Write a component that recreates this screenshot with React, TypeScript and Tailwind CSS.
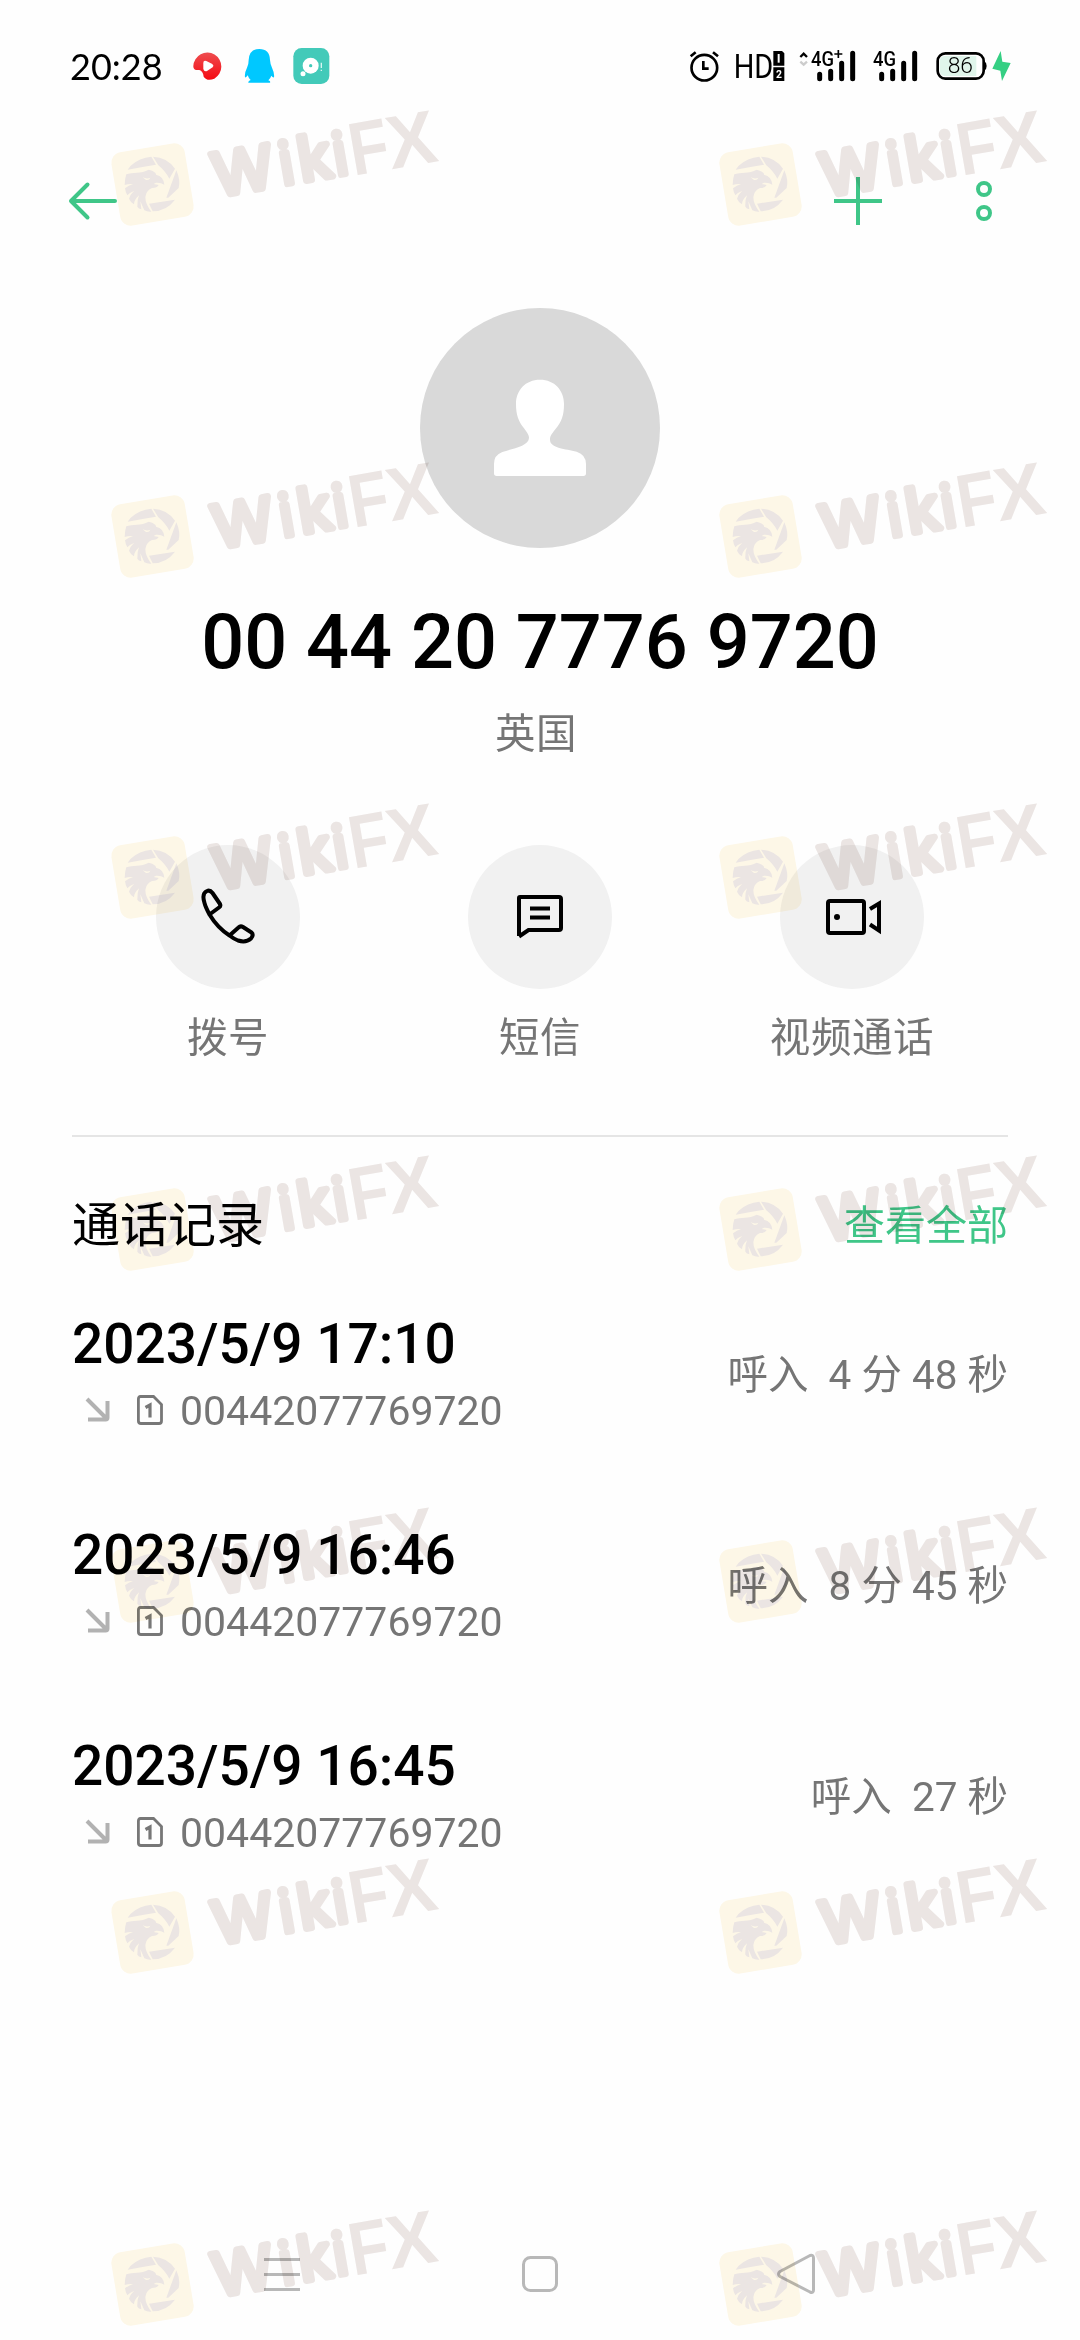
import React from "react";

const GREEN = "#3fc688";

const calls = [
  { date: "2023/5/9 17:10", duration: "4 分 48 秒" },
  { date: "2023/5/9 16:46", duration: "8 分 45 秒" },
  { date: "2023/5/9 16:45", duration: "27 秒" },
];

const marks = [
  "left-[50px] top-[70px]",
  "left-[658px] top-[70px]",
  "left-[50px] top-[422px]",
  "left-[658px] top-[422px]",
  "left-[50px] top-[763px]",
  "left-[658px] top-[763px]",
  "left-[50px] top-[1115px]",
  "left-[658px] top-[1115px]",
  "left-[50px] top-[1467px]",
  "left-[658px] top-[1467px]",
  "left-[50px] top-[1818px]",
  "left-[658px] top-[1818px]",
  "left-[50px] top-[2170px]",
  "left-[658px] top-[2170px]",
];

function Watermark({ place }: { place: string }) {
  return (
    <svg
      className={`pointer-events-none absolute h-[170px] w-[420px] overflow-visible mix-blend-multiply ${place}`}
      viewBox="0 -90 1260 510"
      fontFamily="Liberation Sans, Arial, sans-serif"
    >
      <rect x="196" y="142" width="223" height="223" rx="32" fill="#fef8e8" transform="rotate(-9.5 307.5 253.5)" />
      <g fill="#ece6e4">
        <path d="M242 197 Q268 173 304 170 L318 194 Q280 200 233 209 Z" />
        <path d="M309 170 Q352 172 375 206 L358 236 Q345 212 325 196 Z" />
        <path d="M379 211 Q392 240 386 264 L355 293 L349 293 Z" />
        <path d="M297 311 L375 299 Q350 333 308 334 Z" />
        <path d="M229 223 C246 215 274 222 296 209 C312 213 319 219 318 224 Q341 229 343 254 Q333 247 318 248 L311 252 L326 255 Q322 264 306 264 Q288 272 286 292 Q286 312 304 335 Q292 336 283 331 L271 304 L274 328 Q266 326 262 320 Q261 300 267 286 Q252 300 252 313 Q241 306 237 296 Q241 283 252 273 Q237 279 232 286 Q226 275 225 265 Q236 256 249 252 Q235 251 224 255 Q224 238 229 223 Z" />
      </g>
      <path d="M278 232 Q291 238 301 233 Q298 242 288 240 Z" fill="#fef8e8" />
      <g transform="translate(495 299) rotate(-9.8) scale(3)" fill="#ece6e4" stroke="#ece6e4">
        <g fontSize="62" strokeWidth="6.5" strokeLinejoin="round">
          <text x="3" y="-3">W</text>
          <text x="89" y="-3">k</text>
        </g>
        <g fontFamily="Open Sans, sans-serif" fontSize="59" strokeWidth="6" strokeLinejoin="round">
          <text x="68.8" y="-3">i</text>
          <text x="123.3" y="-3">i</text>
        </g>
        <g fontSize="75" fontWeight="700" stroke="none">
          <text x="140.6" y="0" textLength="39.5" lengthAdjust="spacingAndGlyphs">F</text>
          <text x="179" y="0" textLength="49" lengthAdjust="spacingAndGlyphs">X</text>
        </g>
      </g>
    </svg>
  );
}

function StatusBar() {
  return (
    <div className="flex h-[132px] items-center pl-[70px]">
      <span className="w-[104px] font-['Lato',sans-serif] text-[36px] leading-[40px]">20:28</span>
      <svg className="ml-[13px] h-[40px] w-[150px]" viewBox="410 48 450 120">
        <defs>
          <linearGradient id="red" x1="0" y1="0" x2="0" y2="1">
            <stop offset="0" stopColor="#ee4d50" />
            <stop offset="1" stopColor="#f50a12" />
          </linearGradient>
        </defs>
        <path d="M429 108 A42 42 0 1 1 492 146 Q470 155 460 140 Q458 123 447 120 Q428 122 429 108 Z" fill="url(#red)" />
        <path d="M459 99 Q459 90 468 93 L486 102 Q492 107 487 112 L470 123 Q461 126 459 117 Z" fill="#fff" />
        <path d="M627 57 Q658 57 659 90 Q660 104 665 113 Q673 130 671 142 Q667 143 663 137 Q660 146 654 151 Q662 154 659 158 H594 Q593 153 601 150 Q595 145 592 136 Q588 143 584 142 Q582 129 590 113 Q595 104 595 90 Q597 57 627 57 Z" fill="#00c8ff" />
        <rect x="729" y="54" width="108" height="108" rx="25" fill="#43cab9" />
        <circle cx="781" cy="107" r="24" fill="#fff" />
        <circle cx="781" cy="107" r="5" fill="#43cab9" />
        <circle cx="758" cy="131" r="7.500" fill="#fff" />
        <path d="M813 98 V114 M813 119 V123" stroke="#fff" strokeWidth="4" opacity=".8" />
      </svg>
      <svg className="ml-[350px] h-[40px] w-[330px]" viewBox="50 48 990 120" fontFamily="Roboto, sans-serif">
        <g fill="none" stroke="#000" strokeWidth="8">
          <circle cx="102" cy="113" r="38.500" />
          <path d="M61 79 L76 67 M128 67 L143 79" />
          <path d="M99 93 V116 H115" />
        </g>
        <text x="190" y="143" fontSize="98" textLength="119" lengthAdjust="spacingAndGlyphs">HD</text>
        <path d="M309 63 H335 L342 70 V107 H309 Z M309 112 H342 V153 H309 Z" />
        <path d="M325 72 V98" stroke="#fff" strokeWidth="6" />
        <text x="317" y="145" fontSize="31" fontWeight="700" fill="#fff">2</text>
        <path d="M390 81 L400 71 L410 81" fill="none" stroke="#000" strokeWidth="7" />
        <path d="M390 95 L400 104 L410 95" fill="none" stroke="#ccc" strokeWidth="7" />
        <text x="422" y="107" fontSize="60" fontWeight="500" textLength="69" lengthAdjust="spacingAndGlyphs">4G</text>
        <path d="M492 72 H516 M504 60 V84" stroke="#000" strokeWidth="5" />
        <g stroke="#000" strokeWidth="15" strokeLinecap="round">
          <path d="M448 133 V146 M481 124 V146 M514 100 V146 M547 70 V146" />
          <path d="M634 133 V146 M667 124 V146 M700 100 V146 M733 70 V146" />
        </g>
        <text x="608" y="107" fontSize="60" fontWeight="500" textLength="69" lengthAdjust="spacingAndGlyphs">4G</text>
        <rect x="802" y="70" width="138" height="76" rx="23" fill="#fff" stroke="#000" strokeWidth="8" />
        <path d="M822 78 H918 V138 H822 Q808 136 808 120 V96 Q808 79 822 78 Z" fill="#e0f5eb" />
        <path d="M942 94 Q949 98 949 108 Q949 118 942 122 Z" />
        <text x="832" y="129" fontSize="64" fontWeight="300" textLength="76" lengthAdjust="spacingAndGlyphs">86</text>
        <path d="M991 63 L966 116 L990 122 L995 153 L1021 99 L996 95 Z" fill="#35cf83" />
      </svg>
    </div>
  );
}

function Header() {
  return (
    <div className="flex h-[138px] items-center" style={{ color: GREEN }}>
      <svg className="ml-[68px] h-[40px] w-[52px]" viewBox="0 0 52 40" fill="none" stroke="currentColor" strokeWidth="4" strokeLinecap="round" strokeLinejoin="round">
        <path d="M47 20 H3 M19.500 3.500 L3 20 L19.500 36.500" />
      </svg>
      <svg className="ml-[714px] h-[48px] w-[48px]" viewBox="0 0 48 48" stroke="currentColor" strokeWidth="4">
        <path d="M24 0 V48 M0 24 H48" />
      </svg>
      <svg className="ml-[92px] h-[44px] w-[20px]" viewBox="0 0 20 44" fill="none" stroke="currentColor" strokeWidth="4">
        <circle cx="10" cy="10" r="6" />
        <circle cx="10" cy="34" r="6" />
      </svg>
    </div>
  );
}

function Action({ label, children }: { label: string; children: React.ReactNode }) {
  return (
    <div className="flex w-[312px] flex-col items-center">
      <div className="flex h-[144px] w-[144px] items-center justify-center rounded-full bg-[#f1f1f1]">
        <svg className="h-[72px] w-[72px]" viewBox="0 0 72 72" fill="none" stroke="#000" strokeWidth="4">
          {children}
        </svg>
      </div>
      <span className="mt-[24px] text-[40.500px] leading-[50px] tracking-[0.6px] text-[#757575]">{label}</span>
    </div>
  );
}

function CallRow({ date, duration }: { date: string; duration: string }) {
  return (
    <div className="flex h-[211px] items-center justify-between">
      <div className="flex flex-col gap-[12px]">
        <span className="text-[55px] font-medium leading-[60px]">{date}</span>
        <div className="flex h-[50px] items-center text-[#757575]">
          <svg className="-mt-[2px] ml-[13px] h-[26px] w-[26px]" viewBox="0 0 26 26" fill="none" stroke="#b2b2b2" strokeWidth="4">
            <path d="M2 2 L22 22 M3 22.500 H20.500 Q22.500 22.500 22.500 20.500 V4" />
          </svg>
          <svg className="-mt-[2px] ml-[25px] h-[32px] w-[28px]" viewBox="0 0 28 32" fill="none" stroke="#777" strokeWidth="2.800">
            <path d="M4.500 2.500 H17.500 L25.500 10.500 V27 Q25.500 29.500 23 29.500 H5 Q2.400 29.500 2.400 27 V5 Q2.400 2.500 4.500 2.500 Z" />
            <path d="M9.500 13.500 L14 11 V23.500" strokeWidth="3.200" />
          </svg>
          <span className="ml-[16px] text-[41px] leading-[50px]">00442077769720</span>
        </div>
      </div>
      <span className="whitespace-pre text-[40.500px] leading-[50px] text-[#757575]">{"呼入  " + duration}</span>
    </div>
  );
}

export default function App() {
  return (
    <div className="relative flex h-[2340px] w-[1080px] flex-col overflow-hidden bg-[#fefefe] font-['Roboto','Noto_Sans_CJK_SC',sans-serif] text-black">
      <StatusBar />
      <Header />

      <div className="mt-[38px] flex flex-col items-center">
        <div className="h-[240px] w-[240px] rounded-full bg-[#d9d9d9]">
          <svg className="h-[240px] w-[240px]" viewBox="60 54 720 720">
            <path
              d="M420 269 C464 269 492 301 492 342 C492 376 485 395 466 418 C452 436 450 440 450 449 C450 475 497 476 530 485 Q558 494 558 522 V550 Q558 558 550 558 H290 Q282 558 282 550 V522 Q282 495 307 486 C337 476 387 468 387 443 C387 437 383 430 372 415 C356 394 348 376 348 342 C348 301 376 269 420 269 Z"
              fill="#fff"
            />
          </svg>
        </div>
        <h1 className="mt-[54px] text-[75.700px] font-medium leading-[80px]">00 44 20 7776 9720</h1>
        <p className="mt-[27px] pr-[8px] text-[40.500px] leading-[50px] tracking-[0.5px] text-[#757575]">英国</p>
      </div>

      <div className="mt-[86px] flex justify-center">
        <Action label="拨号">
          <path d="M12.500 22 C10 14 12.500 11 15 10 Q18 8.700 20.500 12 L28 23 Q29 25 27 26.500 L17.500 33.500 C13.500 26 12.500 22 12.500 22 Z M17.500 33.500 C22 41 29 49 37.500 54.500 M37.500 54.500 L46.500 46.500 Q48.500 44.500 51 46 L59.500 51.500 Q62 54 59 57.500 Q54 62 46 59.500 Q42 58 37.500 54.500 Z" strokeLinejoin="round" />
        </Action>
        <Action label="短信">
          <path d="M15 55 V17 Q15 16 16 16 H55 Q57 16 57 18 V47 Q57 49 55 49 H24.500 L15 55.500 M26 27.500 H46 M26 36.500 H46" />
        </Action>
        <Action label="视频通话">
          <rect x="12" y="20" width="36" height="32" rx="2" />
          <circle cx="21" cy="36" r="3" fill="#000" stroke="none" />
          <path d="M54 28 L63 22.500 V49.500 L54 43.500" />
        </Action>
      </div>

      <div className="mx-[72px] mt-[72px] h-[2px] bg-[#e5e5e5]" />

      <div className="mx-[72px] mt-[59px] flex items-center justify-between">
        <h2 className="text-[48px] leading-[60px]">通话记录</h2>
        <span className="text-[41px] leading-[60px]" style={{ color: GREEN }}>查看全部</span>
      </div>

      <div className="mx-[72px] mt-[13px] flex flex-col">
        {calls.map((c) => (
          <CallRow key={c.date} date={c.date} duration={c.duration} />
        ))}
      </div>

      <div className="mt-auto flex h-[132px] items-center px-[258px]">
        <svg className="h-[48px] w-[48px]" viewBox="0 0 48 48" stroke="#b8b8b8" strokeWidth="3">
          <path d="M6 9.500 H42 M6 24.500 H42 M6 39.500 H42" />
        </svg>
        <svg className="ml-[210px] h-[48px] w-[48px]" viewBox="0 0 48 48" fill="none" stroke="#b8b8b8" strokeWidth="3">
          <rect x="7.500" y="7.500" width="33" height="33" rx="7" />
        </svg>
        <svg className="ml-[209px] h-[48px] w-[48px]" viewBox="0 0 48 48" fill="none" stroke="#b8b8b8" strokeWidth="3" strokeLinejoin="round">
          <path d="M7 21.500 L37 5.500 Q40.500 4.500 40.500 8 V40 Q40.500 43.500 37 42 L7 26.500 Q4 24 7 21.500 Z" />
        </svg>
      </div>

      {marks.map((place) => (
        <Watermark key={place} place={place} />
      ))}
    </div>
  );
}
